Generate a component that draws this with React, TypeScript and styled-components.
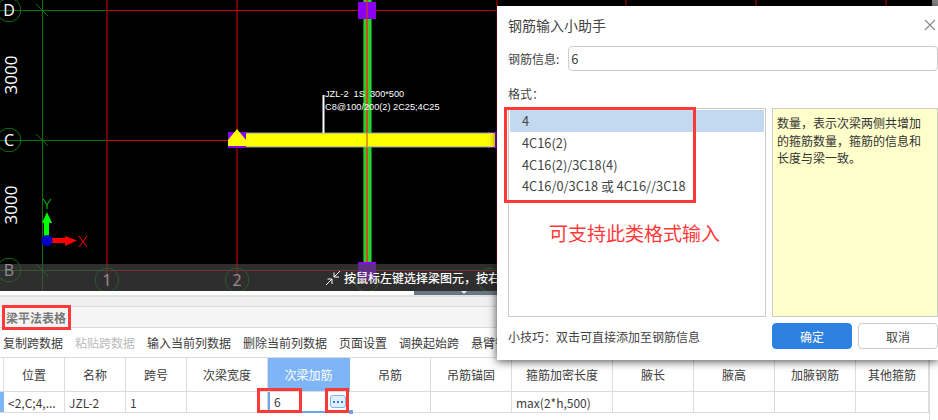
import React from "react";
import styled, { createGlobalStyle } from "styled-components";

const UI_FONT = `"Noto Sans CJK SC", "Open Sans", sans-serif`;

const GlobalStyle = createGlobalStyle`
  html, body { margin: 0; padding: 0; background: #fff; }
  * { box-sizing: border-box; }
`;

const Page = styled.div`
  position: relative;
  width: 938px;
  height: 420px;
  overflow: hidden;
  display: flex;
  flex-direction: column;
  background: #fff;
  font-family: ${UI_FONT};
  font-size: 12px;
  color: #444;
`;

const Viewport = styled.section`
  position: relative;
  height: 291px;
  flex: none;
  background: #000;
  overflow: hidden;
`;

const ViewportArt = styled.svg`
  display: block;
`;

const StatusBar = styled.div`
  position: absolute;
  left: 0;
  right: 0;
  bottom: 0;
  height: 27px;
  padding: 0 0 0 325px;
  display: flex;
  align-items: center;
  gap: 3px;
  background: rgba(73, 73, 73, 0.63);
  color: #fff;
  font-weight: 500;
  white-space: nowrap;
`;

const Splitter = styled.div`
  height: 4px;
  flex: none;
  display: flex;
  justify-content: flex-end;
  background: #fff;
`;

const SplitterHandle = styled.div`
  width: 524px;
  height: 4px;
  padding-left: 47px;
  background: #6b7684;

  &::before {
    content: "";
    display: block;
    width: 0;
    height: 0;
    border-left: 3px solid transparent;
    border-right: 3px solid transparent;
    border-top: 3px solid #e8e8e8;
  }
`;

const Gutter = styled.div`
  height: 11px;
  flex: none;
  background: #f0f0f0;
  border-top: 2px solid #e2e2e2;
`;

const TabStrip = styled.div`
  height: 22px;
  flex: none;
  display: flex;
  align-items: center;
  padding-left: 6px;
  background: #f5f5f5;
  border-top: 1px solid #dcdcdc;
  border-bottom: 1px solid #dcdcdc;
  color: #777;
  font-weight: 700;
`;

const Toolbar = styled.div`
  height: 29px;
  flex: none;
  display: flex;
  align-items: center;
  gap: 12px;
  padding-left: 3px;
  white-space: nowrap;
  overflow: hidden;
`;

const ToolItem = styled.span<{ $disabled?: boolean }>`
  color: ${(p) => (p.$disabled ? "#bbb" : "#3c3c3c")};
`;

const TableArea = styled.div`
  width: 930px;
  flex: 1;
  border-right: 1px solid #dcdcdc;
`;

const TableGrid = styled.div`
  display: grid;
  grid-template-columns: 4px 61px 61px 61px 81px 82px 81px 81px 101px 81px 81px 81px 73px;
  grid-template-rows: 34px 21px;
  border-top: 1px solid #dcdcdc;
`;

const HeadCell = styled.div<{ $active?: boolean }>`
  display: flex;
  align-items: center;
  justify-content: center;
  border-right: 1px solid ${(p) => (p.$active ? "#7db5f7" : "#dcdcdc")};
  border-bottom: 1px solid #dcdcdc;
  background: ${(p) => (p.$active ? "#7db5f7" : "#fff")};
  color: ${(p) => (p.$active ? "#fff" : "#3c3c3c")};
`;

const BodyCell = styled.div`
  display: flex;
  align-items: center;
  padding-left: 4px;
  border-right: 1px solid #dcdcdc;
  border-bottom: 1px solid #dcdcdc;
  color: #3c3c3c;
  white-space: nowrap;
  overflow: hidden;
`;

const RowMarker = styled.div`
  background: #7db5f7;
  border-bottom: 1px solid #dcdcdc;
`;

const EditingCell = styled.div`
  position: relative;
  display: flex;
  align-items: center;
  justify-content: space-between;
  padding: 0 4px 0 4px;
  border-left: 2px solid #6aa5ea;
  border-bottom: 2px solid #6aa5ea;
  color: #3c3c3c;
`;

const MoreButton = styled.button`
  width: 16px;
  height: 13px;
  padding: 0;
  display: flex;
  align-items: center;
  justify-content: center;
  gap: 2px;
  border: 1px solid #7db5f7;
  border-radius: 3px;
  background: #e3eefb;
`;

const MoreDot = styled.i`
  width: 2px;
  height: 2px;
  background: #2d7fe0;
`;

const FillHandle = styled.span`
  position: absolute;
  right: -3px;
  bottom: -3px;
  width: 4px;
  height: 4px;
  background: #6aa5ea;
`;

const Dialog = styled.div`
  position: absolute;
  left: 497px;
  top: 6px;
  width: 441px;
  height: 354px;
  padding-left: 11px;
  background: #fff;
  box-shadow: 0 1px 9px rgba(0, 0, 0, 0.75);
  color: #444;
`;

const DialogHeader = styled.header`
  height: 40px;
  display: flex;
  align-items: center;
  justify-content: space-between;
  padding: 0 2px 2px 0;
  font-size: 14px;
`;

const InfoRow = styled.div`
  height: 25px;
  display: flex;
  align-items: center;
  gap: 9px;
`;

const InfoInput = styled.div`
  flex: 1;
  height: 25px;
  display: flex;
  align-items: center;
  padding-left: 2px;
  border: 1px solid #ccc;
  border-radius: 4px;
  font-size: 13px;
`;

const FormatLabel = styled.div`
  height: 37px;
  padding-top: 14px;
  line-height: 18px;
`;

const Panels = styled.div`
  height: 209px;
  display: flex;
  gap: 6px;
`;

const FormatList = styled.ul`
  width: 258px;
  margin: 0;
  padding: 1px;
  list-style: none;
  border: 1px solid #ccc;
  font-size: 12.8px;
`;

const FormatItem = styled.li<{ $selected?: boolean }>`
  height: 21.7px;
  display: flex;
  align-items: center;
  padding-left: 12px;
  background: ${(p) => (p.$selected ? "#c3d9f0" : "transparent")};
`;

const HintPanel = styled.div`
  flex: 1;
  padding: 5px 16px 5px 4px;
  border: 1px solid #ccc;
  background: #ffffcc;
  line-height: 17.5px;
  color: #333;
`;

const DialogFooter = styled.footer`
  height: 32px;
  display: flex;
  align-items: flex-end;
  justify-content: space-between;
`;

const TipText = styled.div`
  height: 26px;
  display: flex;
  align-items: center;
`;

const FooterButtons = styled.div`
  display: flex;
  gap: 6px;
`;

const ActionButton = styled.button<{ $primary?: boolean }>`
  width: 80px;
  height: 26px;
  padding: 0;
  border: 1px solid ${(p) => (p.$primary ? "#2d7fe0" : "#ccc")};
  border-radius: 4px;
  background: ${(p) => (p.$primary ? "#2d7fe0" : "#fff")};
  color: ${(p) => (p.$primary ? "#fff" : "#444")};
  font-family: inherit;
  font-size: 12px;
`;

const Callout = styled.div<{ $x: number; $y: number; $w: number; $h: number }>`
  position: absolute;
  left: ${(p) => p.$x}px;
  top: ${(p) => p.$y}px;
  width: ${(p) => p.$w}px;
  height: ${(p) => p.$h}px;
  border: 3px solid #ff3838;
`;

const CalloutNote = styled.div`
  position: absolute;
  left: 549px;
  top: 219px;
  color: #ff3838;
  font-size: 19px;
  line-height: 27px;
  white-space: nowrap;
`;

const GRID_GREEN = "#0b720b";
const DARK_RED = "#8c0000";
const BRIGHT_RED = "#d20000";

/* Axis bubbles are drawn as 12-sided polygons, the way the CAD view tessellates circles. */
const bubblePoints = (cx: number, cy: number, r: number) =>
  Array.from({ length: 12 }, (_, i) => {
    const a = (Math.PI / 6) * i + Math.PI / 12;
    return `${(cx + r * Math.cos(a)).toFixed(1)},${(cy + r * Math.sin(a)).toFixed(1)}`;
  }).join(" ");

const AxisBubble = ({ x, y, label }: { x: number; y: number; label?: string }) => (
  <g>
    <polygon points={bubblePoints(x, y, 12)} fill="none" stroke={GRID_GREEN} />
    {label && (
      <text
        x={x}
        y={y + 6}
        textAnchor="middle"
        fill="#fff"
        fontFamily="'Open Sans', sans-serif"
        fontSize="16"
      >
        {label}
      </text>
    )}
  </g>
);

const DimensionLabel = ({ y }: { y: number }) => (
  <text
    transform={`translate(17 ${y}) rotate(-90)`}
    textAnchor="middle"
    fill="#fff"
    fontFamily="'Open Sans', sans-serif"
    fontSize="17"
  >
    3000
  </text>
);

const GridRow = ({ y }: { y: number }) => (
  <g>
    <line x1="0" y1={y + 0.5} x2="107" y2={y + 0.5} stroke={GRID_GREEN} />
    <line x1="107" y1={y + 0.5} x2="938" y2={y + 0.5} stroke={BRIGHT_RED} />
    <line x1="36" y1={y - 6} x2="48" y2={y + 6} stroke={GRID_GREEN} />
  </g>
);

const CadScene = () => (
  <ViewportArt width="938" height="291" viewBox="0 0 938 291">
    <line x1="42.5" y1="0" x2="42.5" y2="291" stroke={GRID_GREEN} />
    {[107, 237, 367, 497, 626, 756, 886].map((x) => (
      <line key={x} x1={x} y1="0" x2={x} y2="285" stroke={DARK_RED} strokeWidth="1.6" />
    ))}
    <GridRow y={10} />
    <GridRow y={140} />
    <GridRow y={270} />

    <AxisBubble x={9} y={10} label="D" />
    <AxisBubble x={9} y={140} label="C" />
    <AxisBubble x={9} y={270} label="B" />
    <AxisBubble x={107} y={280} label="1" />
    <AxisBubble x={237} y={280} label="2" />
    <AxisBubble x={367} y={280} />
    <AxisBubble x={490} y={280} />
    <DimensionLabel y={75} />
    <DimensionLabel y={205} />

    {/* Secondary beam running vertically through the span */}
    <rect x="363" y="0" width="9" height="268" fill="#0f7d1c" />
    <rect x="364" y="0" width="7" height="268" fill="#2ecf2e" />
    <rect x="366" y="0" width="2" height="268" fill="#c2531a" />
    <rect x="358" y="2" width="18" height="17" fill="#8a00f0" />
    <line x1="367" y1="2" x2="367" y2="19" stroke="#c03040" strokeWidth="1.5" />
    <rect x="358" y="262" width="18" height="18" fill="#8a00f0" />

    {/* Primary beam being edited */}
    <rect x="228" y="132" width="18" height="16" fill="#8a00f0" />
    <rect x="488" y="132" width="12" height="16" fill="#8a00f0" />
    <rect x="246" y="133" width="249" height="14" fill="#ffff00" />
    <polygon points="237,129 246,140 246,146 228,146 228,140" fill="#ffff00" />
    <line x1="246" y1="133" x2="490" y2="133" stroke="#8aa0a8" />
    <line x1="246" y1="147" x2="490" y2="147" stroke="#8aa0a8" />
    <line x1="367" y1="133" x2="367" y2="147" stroke="#d8a000" strokeWidth="2" />

    {/* Beam annotation with its leader */}
    <line x1="323.5" y1="95" x2="323.5" y2="133" stroke="#fff" strokeWidth="2" />
    <text
      x="325"
      y="97"
      fill="#fff"
      fontFamily="'Liberation Sans', sans-serif"
      fontSize="9.2"
      xmlSpace="preserve"
    >
      JZL-2  1S  300*500
    </text>
    <text x="325" y="110" fill="#fff" fontFamily="'Liberation Sans', sans-serif" fontSize="9.2">
      C8@100/200(2) 2C25;4C25
    </text>

    {/* Coordinate gizmo */}
    <rect x="44" y="222" width="5" height="14" fill="#00ff00" />
    <polygon points="47,212 52,223 42,223" fill="#00ff00" />
    <rect x="52" y="238" width="14" height="5" fill="#ff0000" />
    <polygon points="77,240.5 65,236 65,246" fill="#ff0000" />
    <circle cx="47" cy="240.5" r="5.5" fill="#0000c8" />
    <path d="M43 199l4 5.5 4-5.5M47 204.5V209" fill="none" stroke="#00e000" />
    <path d="M79 236l8 11M87 236l-8 11" fill="none" stroke="#ff0000" />

    <rect x="932" y="0" width="6" height="6" fill="#888" />
  </ViewportArt>
);

const PickIcon = () => (
  <svg width="16" height="16" viewBox="0 0 16 16" fill="none" stroke="#fff" strokeWidth="1">
    <path d="M15 1L9 7M9 2.5V7H14M1 15l6-6M2.5 9H7v5" />
  </svg>
);

const CloseIcon = () => (
  <svg width="12" height="12" viewBox="0 0 12 12" fill="none" stroke="#888" strokeWidth="1.1">
    <path d="M1 1l10 10M11 1L1 11" />
  </svg>
);

const TOOL_ITEMS = ["复制跨数据", "粘贴跨数据", "输入当前列数据", "删除当前列数据", "页面设置", "调换起始跨", "悬臂钢筋代号"];
const HEADERS = ["位置", "名称", "跨号", "次梁宽度", "次梁加筋", "吊筋", "吊筋锚固", "箍筋加密长度", "腋长", "腋高", "加腋钢筋", "其他箍筋"];
const FORMATS = ["4", "4C16(2)", "4C16(2)/3C18(4)", "4C16/0/3C18 或 4C16//3C18"];

export default function App() {
  return (
    <Page>
      <GlobalStyle />
      <Viewport>
        <CadScene />
        <StatusBar>
          <PickIcon />
          <span>按鼠标左键选择梁图元，按右键确认选择</span>
        </StatusBar>
      </Viewport>
      <Splitter>
        <SplitterHandle />
      </Splitter>
      <Gutter />
      <TabStrip>梁平法表格</TabStrip>
      <Toolbar>
        {TOOL_ITEMS.map((item) => (
          <ToolItem key={item} $disabled={item === "粘贴跨数据"}>
            {item}
          </ToolItem>
        ))}
      </Toolbar>
      <TableArea>
        <TableGrid>
          <HeadCell />
          {HEADERS.map((h) => (
            <HeadCell key={h} $active={h === "次梁加筋"}>
              {h}
            </HeadCell>
          ))}
          <RowMarker />
          <BodyCell>&lt;2,C;4,...</BodyCell>
          <BodyCell>JZL-2</BodyCell>
          <BodyCell>1</BodyCell>
          <BodyCell />
          <EditingCell>
            6
            <MoreButton aria-label="更多">
              <MoreDot />
              <MoreDot />
              <MoreDot />
            </MoreButton>
            <FillHandle />
          </EditingCell>
          <BodyCell />
          <BodyCell />
          <BodyCell>max(2*h,500)</BodyCell>
          <BodyCell />
          <BodyCell />
          <BodyCell />
          <BodyCell />
        </TableGrid>
      </TableArea>

      <Dialog>
        <DialogHeader>
          钢筋输入小助手
          <CloseIcon />
        </DialogHeader>
        <InfoRow>
          钢筋信息:
          <InfoInput>6</InfoInput>
        </InfoRow>
        <FormatLabel>格式：</FormatLabel>
        <Panels>
          <FormatList>
            {FORMATS.map((f, i) => (
              <FormatItem key={f} $selected={i === 0}>
                {f}
              </FormatItem>
            ))}
          </FormatList>
          <HintPanel>数量，表示次梁两侧共增加的箍筋数量，箍筋的信息和长度与梁一致。</HintPanel>
        </Panels>
        <DialogFooter>
          <TipText>小技巧：双击可直接添加至钢筋信息</TipText>
          <FooterButtons>
            <ActionButton $primary>确定</ActionButton>
            <ActionButton>取消</ActionButton>
          </FooterButtons>
        </DialogFooter>
      </Dialog>

      <Callout $x={2} $y={305} $w={69} $h={25} />
      <Callout $x={504} $y={107} $w={192} $h={96} />
      <Callout $x={257} $y={388} $w={45} $h={25} />
      <Callout $x={325} $y={388} $w={24} $h={25} />
      <CalloutNote>可支持此类格式输入</CalloutNote>
    </Page>
  );
}
